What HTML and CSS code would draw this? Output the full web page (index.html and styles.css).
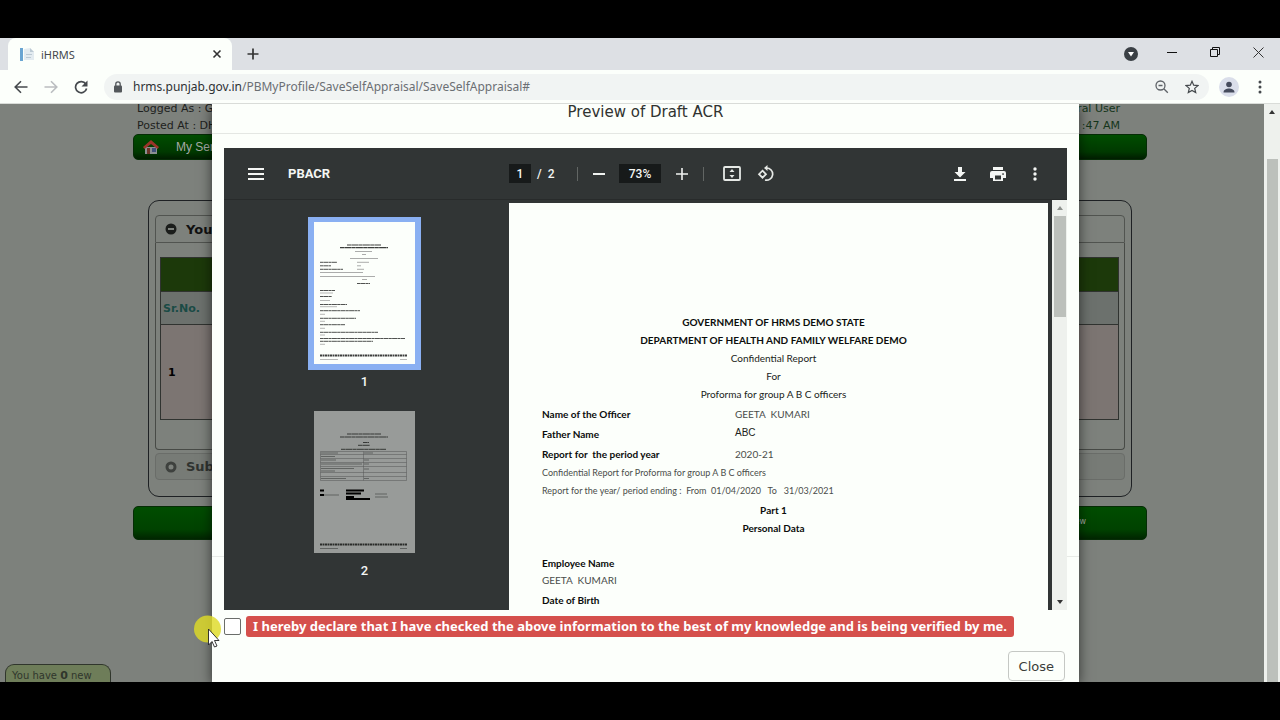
FILE: index.html
```html
<!DOCTYPE html>
<html lang="en">
<head>
<meta charset="utf-8">
<title>iHRMS</title>
<link rel="stylesheet" href="styles.css">
</head>
<body>
<div class="browser">
  <div class="tabstrip">
    <div class="tab">
      <svg class="favicon" width="16" height="16" viewBox="0 0 16 16"><path fill="#6aa5d2" d="M1 2h3v13H1z"/><path fill="#e3ebf0" d="M5 3l6-1 4 4v8H5z"/><path fill="#bccad4" d="M11 2l4 4h-4zM7 8h6v1H7zM7 11h5v1H7z"/></svg>
      <span class="tab-title">iHRMS</span>
      <button class="icon-btn" aria-label="Close tab"><svg width="10" height="10" viewBox="0 0 10 10"><path d="M1.500 1.500l7 7M8.500 1.500l-7 7" stroke="#333" stroke-width="1.600"/></svg></button>
    </div>
    <button class="icon-btn new-tab" aria-label="New tab"><svg width="12" height="12" viewBox="0 0 12 12"><path d="M6 .5v11M.5 6h11" stroke="#333" stroke-width="1.700"/></svg></button>
    <div class="window-controls">
      <button class="icon-btn search-tabs" aria-label="Search tabs"><svg width="14" height="14" viewBox="0 0 14 14"><circle cx="7" cy="7" r="7" fill="#3b4045"/><path d="M4 5h6L7 9.500z" fill="#fff"/></svg></button>
      <button class="icon-btn" aria-label="Minimize"><svg width="10" height="10" viewBox="0 0 10 10"><path d="M0 3.500h10" stroke="#111"/></svg></button>
      <button class="icon-btn" aria-label="Restore"><svg width="10" height="14" viewBox="0 0 10 14" fill="none" stroke="#111"><path d="M.5 2.500h7v7h-7zM2.500 2.500v-2h7v7h-2"/></svg></button>
      <button class="icon-btn" aria-label="Close window"><svg width="11" height="15" viewBox="0 0 11 15"><path d="M.5.5l10 10M10.500.5l-10 10" stroke="#333"/></svg></button>
    </div>
  </div>

  <div class="toolbar">
    <button class="icon-btn" aria-label="Back"><svg width="14" height="14" viewBox="0 0 14 14" fill="none" stroke="#45494d" stroke-width="1.600"><path d="M13.500 7H1.500M7 1.200L1.200 7 7 12.800"/></svg></button>
    <button class="icon-btn" aria-label="Forward"><svg width="14" height="14" viewBox="0 0 14 14" fill="none" stroke="#babdc0" stroke-width="1.600"><path d="M.5 7h12M7 1.200L12.800 7 7 12.800"/></svg></button>
    <button class="icon-btn" aria-label="Reload"><svg width="14" height="14" viewBox="0 0 14 14"><path d="M11.800 4A5.600 5.600 0 1 0 12.600 8.500" fill="none" stroke="#45494d" stroke-width="1.700"/><path d="M13.500.5v6h-6z" fill="#45494d"/></svg></button>
    <div class="address">
      <svg width="10" height="12" viewBox="0 0 10 12"><rect x="1" y="4.500" width="8" height="7" rx="1" fill="#53575b"/><path d="M2.800 5V3a2.200 2.200 0 0 1 4.400 0v2" fill="none" stroke="#53575b" stroke-width="1.300"/></svg>
      <div class="url"><span class="host">hrms.punjab.gov.in</span>/PBMyProfile/SaveSelfAppraisal/SaveSelfAppraisal#</div>
      <button class="icon-btn" aria-label="Zoom"><svg width="14" height="14" viewBox="0 0 14 14" fill="none" stroke="#5f6368" stroke-width="1.300"><circle cx="5.500" cy="5.500" r="4.500"/><path d="M3.500 5.500h4M8.800 8.800l4 4"/></svg></button>
      <button class="icon-btn" aria-label="Bookmark"><svg width="14" height="14" viewBox="0 0 14 14" fill="none" stroke="#45494d" stroke-width="1.200"><path d="M7 1.300l1.700 3.900 4.200.4-3.200 2.800 1 4.200L7 10.400l-3.700 2.200 1-4.200L1.100 5.600l4.200-.4z"/></svg></button>
    </div>
    <button class="icon-btn profile" aria-label="Profile"><svg width="20" height="20" viewBox="0 0 20 20"><circle cx="10" cy="10" r="10" fill="#dadeea"/><circle cx="10" cy="7.500" r="2.800" fill="#454b5c"/><path d="M4.500 15.500c0-3 3-4 5.500-4s5.500 1 5.500 4z" fill="#454b5c"/></svg></button>
    <button class="icon-btn" aria-label="Menu"><svg width="4" height="14" viewBox="0 0 4 14" fill="#45494d"><circle cx="2" cy="2" r="1.500"/><circle cx="2" cy="7" r="1.500"/><circle cx="2" cy="12" r="1.500"/></svg></button>
  </div>

  <div class="viewport">
    <div class="page">
      <div class="user-lines">
        <div>Logged As : GE<br>Posted At : DH</div>
        <div class="user-right">ral User<br>:47 AM</div>
      </div>
      <div class="nav">
        <svg width="18" height="16" viewBox="0 0 18 16"><path d="M3 8h12v7H3z" fill="#8b8f92"/><path d="M9 1L1 8l1.500 2L9 5l6.500 5L17 8z" fill="#9a3429"/><path d="M5 9h3v6H5z" fill="#6b3428"/><path d="M10 9h4v4h-4z" fill="#40507a"/></svg>
        <span>My Service</span>
      </div>
      <div class="panel">
        <div class="section-head">
          <svg width="12" height="12" viewBox="0 0 12 12"><circle cx="6" cy="6" r="5.500" fill="#1b1d1b"/><path d="M3 5h6v2H3z" fill="#7d817c"/></svg>
          <span>Your</span>
        </div>
        <div class="section-body">
          <table class="grid">
            <tr class="band"><td colspan="2"></td></tr>
            <tr class="heads"><th>Sr.No.</th><th></th></tr>
            <tr class="record"><td>1</td><td></td></tr>
          </table>
        </div>
        <div class="section-head closed">
          <svg width="12" height="12" viewBox="0 0 12 12"><circle cx="6" cy="6" r="4" fill="#7d817c" stroke="#3e413e" stroke-width="3"/></svg>
          <span>Submitted</span>
        </div>
      </div>
      <div class="action-bar">View</div>
    </div>
    <div class="scrollbar"><div class="arrow-up"></div><div class="thumb"></div></div>

    <div class="notice">You have <b>0</b> new</div>

    <div class="overlay">
      <div class="modal">
        <h1 class="modal-title">Preview of Draft ACR</h1>
        <div class="modal-rule"></div>
        <div class="modal-body">
          <div class="pdf">
            <div class="pdf-bar">
              <div class="pdf-name">
                <button class="icon-btn" aria-label="Toggle sidebar"><svg width="16" height="12" viewBox="0 0 16 12"><path d="M0 1h16M0 6h16M0 11h16" stroke="#f4f6f4" stroke-width="2"/></svg></button>
                <span>PBACR</span>
              </div>
              <div class="pdf-pages"><input class="page-input" type="text" value="1" aria-label="Page"><span>/</span><span>2</span></div>
              <i class="sep"></i>
              <button class="icon-btn" aria-label="Zoom out"><svg width="12" height="12" viewBox="0 0 12 12"><path d="M0 6h12" stroke="#f0f2f0" stroke-width="2"/></svg></button>
              <input class="zoom-input" type="text" value="73%" aria-label="Zoom level">
              <button class="icon-btn" aria-label="Zoom in"><svg width="12" height="12" viewBox="0 0 12 12"><path d="M0 6h12M6 0v12" stroke="#f0f2f0" stroke-width="1.600"/></svg></button>
              <i class="sep"></i>
              <button class="icon-btn fit" aria-label="Fit to page"><svg width="18" height="15" viewBox="0 0 18 15"><rect x="1" y="1" width="16" height="13" rx="1" fill="none" stroke="#e6e9e6" stroke-width="1.800"/><path d="M9 3l2.500 3h-5zM9 12L6.500 9h5z" fill="#e6e9e6"/></svg></button>
              <button class="icon-btn" aria-label="Rotate"><svg width="18" height="18" viewBox="0 0 18 18" fill="none" stroke="#e6e9e6" stroke-width="1.700"><path d="M5.500 5.700L9 9.200l-3.500 3.500L2 9.200zM9.500 3a6.100 6.100 0 1 1-1.500 12"/><path d="M10.500 0v6L7 3z" fill="#e6e9e6" stroke="none"/></svg></button>
              <div class="pdf-actions">
                <button class="icon-btn" aria-label="Download"><svg width="12" height="14" viewBox="0 0 12 14" fill="#f4f6f4"><path d="M4 0h4v5h3.500L6 10.500.5 5H4zM0 12h12v2H0z"/></svg></button>
                <button class="icon-btn" aria-label="Print"><svg width="16" height="14" viewBox="0 0 16 14"><path fill="#f4f6f4" fill-rule="evenodd" d="M3 0h10v3H3zM2 4h12q2 0 2 2v5h-3v3H3v-3H0V6q0-2 2-2zM5 8.500v4h6v-4zM13 6.200a.8.8 0 1 0 .1 0z"/></svg></button>
                <button class="icon-btn" aria-label="More"><svg width="4" height="14" viewBox="0 0 4 14" fill="#f4f6f4"><circle cx="2" cy="2" r="1.700"/><circle cx="2" cy="7" r="1.700"/><circle cx="2" cy="12" r="1.700"/></svg></button>
              </div>
            </div>
            <div class="pdf-main">
              <div class="thumbs">
                <div class="sheet current">
                  <svg width="101" height="142" viewBox="0 0 101 142" stroke="#3c3e3c" stroke-width=".9">
                    <path d="M33 23h34M26 25.700h48" stroke-width="1.200" stroke-dasharray="4 .3 7 .3"/>
                    <path d="M41 29.500h17M48 32.500h4M36 36.500h28M43 40.300h12M43 43.800h4M43 47.300h7M6 50.500h43M6 54.500h55M48 57.500h5" stroke-width=".7" stroke="#888"/>
                    <path d="M43 61.500h13M6 40.300h17M6 43.800h11M6 47.300h23M6 68.500h15M6 74.500h12M6 82.500h27M6 88.700h40M6 96.300h36M6 102.700h25M6 110.300h58M6 116.500h85M6 119.300h53" stroke-dasharray="3 .3 5 .3"/>
                    <path d="M6 71h13M6 78.500h10M6 84.700h17M6 92.300h5M6 99.300h5M6 106.300h5M6 113h5M6 122.300h5M6 137.500h18M86 137.500h7" stroke-width=".7" stroke="#999"/>
                    <path d="M6 133.500h87" stroke-width="1.800" stroke-dasharray="2 .5"/>
                  </svg>
                </div>
                <div class="thumb-no">1</div>
                <div class="sheet dim">
                  <svg width="101" height="142" viewBox="0 0 101 142" stroke="#2a2c2a">
                    <path d="M33 23h34M26 26h48M44 34.300h12M27 38.300h45M49 31.500h6" stroke-width=".9" stroke-dasharray="4 .3 7 .3"/>
                    <path d="M6.500 40.500h86v29h-86zM49.500 40.500v29M6.500 43.500h86M6.500 47.500h86M6.500 51.500h86M6.500 55.500h86M6.500 61.500h86M6.500 65.500h86" stroke="#555" stroke-width=".5" fill="none"/>
                    <path d="M7 42h17M50 42h9M7 45.500h14M7 49h15M7 53h41M7 57.500h33M7 60h14M7 67.500h25M50 49h5M50 53h5M50 58h5M50 67.500h5M7 84h18M61 83h12M61 86h13M6 137.500h18M86 137.500h7" stroke-width=".5"/>
                    <path d="M6 79.500h4M6 84h4M32 79.500h18M32 82.500h15M32 86h8M32 88h24" stroke="#000" stroke-width="2"/>
                    <path d="M6 133.500h87" stroke-width="1.800" stroke-dasharray="2 .5"/>
                  </svg>
                </div>
                <div class="thumb-no">2</div>
              </div>
              <div class="document">
                <div class="doc-title">
                  <b>GOVERNMENT OF HRMS DEMO STATE</b>
                  <b>DEPARTMENT OF HEALTH AND FAMILY WELFARE DEMO</b>
                  <span>Confidential Report</span>
                  <span>For</span>
                  <span>Proforma for group A B C officers</span>
                </div>
                <dl class="facts">
                  <dt>Name of the Officer</dt><dd>GEETA&nbsp; KUMARI</dd>
                  <dt>Father Name</dt><dd class="arial">ABC</dd>
                  <dt>Report for&nbsp; the period year</dt><dd>2020-21</dd>
                </dl>
                <p class="small">Confidential Report for Proforma for group A B C officers</p>
                <p class="small">Report for the year/ period ending :&nbsp; From&nbsp; 01/04/2020&nbsp;&nbsp; To&nbsp;&nbsp; 31/03/2021</p>
                <div class="part"><b>Part 1</b><b>Personal Data</b></div>
                <dl class="fields">
                  <dt>Employee Name</dt><dd>GEETA&nbsp; KUMARI</dd>
                  <dt>Date of Birth</dt>
                </dl>
              </div>
              <div class="pdf-scroll"><div class="arrow-up faint"></div><div class="pdf-thumb"></div><div class="arrow-down"></div></div>
            </div>
          </div>
          <div class="declare">
            <input type="checkbox" id="declare">
            <label for="declare">I hereby declare that I have checked the above information to the best of my knowledge and is being verified by me.</label>
          </div>
        </div>
        <div class="modal-foot"><button class="close-btn">Close</button></div>
      </div>
    </div>

    <svg class="pointer" width="30" height="36" viewBox="0 0 30 36"><circle cx="13.500" cy="14" r="13.500" fill="#dedb26" fill-opacity=".82"/><path d="M14.500 14v16l3.500-3.500 2.500 5.500 2.500-1-2.500-5.500h4.500z" fill="#fff" stroke="#222" stroke-width=".9"/></svg>
  </div>
</div>
</body>
</html>
```
FILE: styles.css
```css
* { box-sizing: border-box; }
body { margin: 0; background: #000; font-family: "DejaVu Sans", sans-serif; }
h1, p, dl, dd { margin: 0; }
svg { display: block; flex: none; }
.icon-btn { display: flex; flex: none; padding: 0; border: 0; background: none; }

.browser { display: flex; flex-direction: column; height: 100vh; padding: 38px 0; }

/* Browser chrome */
.tabstrip { display: flex; align-items: center; height: 32px; padding: 0 16px 0 8px; background: #dde0e4; }
.tab { display: flex; align-items: center; align-self: stretch; width: 224px; padding: 0 10px 0 11px; border-radius: 8px 8px 0 0; background: #fcfffb; }
.tab-title { flex: 1; margin-left: 6px; font: 11px "Noto Sans", sans-serif; color: #45494d; }
.new-tab { margin-left: 15px; }
.window-controls { display: flex; align-items: center; gap: 33px; margin-left: auto; }
.search-tabs { margin-right: -4px; }
.toolbar { display: flex; align-items: center; flex: none; gap: 16px; height: 34px; padding: 0 18px 0 14px; background: #fcfffb; border-bottom: 1px solid #d9dcd8; }
.address { display: flex; flex: 1; align-items: center; gap: 16px; height: 26px; margin-right: -6px; padding: 0 10px 0 9px; border-radius: 13px; background: #f1f4f3; }
.profile { margin-right: 3px; }
.url { flex: 1; margin-left: -6px; font: 12px "Noto Sans", sans-serif; color: #6b6f73; white-space: nowrap; }
.host { color: #2e3134; }

.viewport { position: relative; display: flex; flex: 1; min-height: 0; overflow: hidden; background: #7d817c; }
.scrollbar { display: flex; flex-direction: column; align-items: center; width: 16px; padding-top: 6px; background: #eef1ed; }
.arrow-up, .arrow-down { width: 0; border: 3px solid transparent; }
.arrow-up { border-top: 0; border-bottom: 4px solid #333; }
.arrow-down { border-bottom: 0; border-top: 4px solid #333; }
.arrow-up.faint { border-bottom-color: #8d918d; }
.thumb { flex: 1; width: 11px; margin-top: 45px; background: #bcc0bb; }

/* Page behind the dialog */
.page { flex: 1; min-width: 0; padding: 0 117px 0 133px; }
.user-lines { display: flex; justify-content: space-between; margin-top: -4px; padding: 0 27px 0 4px; font-size: 11px; line-height: 17px; color: #1d1f1d; }
.user-right { text-align: right; color: #14351a; }
.nav { display: flex; align-items: center; gap: 16px; height: 26px; padding-left: 8px; border: 1px solid #062c06; border-radius: 5px; background: linear-gradient(#004d00, #003900 70%, #001d00); font: 12px "Liberation Sans", sans-serif; color: #a6aaa6; }
.panel { margin: 40px 15px 0; padding: 14px 6px 16px; border: 1px solid #1e2124; border-radius: 11px; }
.section-head { display: flex; align-items: center; gap: 9px; height: 28px; padding-left: 9px; border: 1px solid #515450; border-radius: 4px 4px 0 0; font-size: 13px; font-weight: bold; color: #111; }
.section-head.closed { height: 27px; margin-top: 3px; border-color: #6a6d69; border-radius: 4px; color: #303330; background: #777b76; }
.section-body { padding: 14px 5px 29px 4px; border: 1px solid #474a46; border-top: 0; border-radius: 0 0 4px 4px; }
.grid { width: 100%; border-collapse: collapse; table-layout: fixed; font-size: 11px; font-weight: bold; }
.grid td, .grid th { padding: 0 2px; border: 1px solid #303330; text-align: left; }
.grid .band td { height: 34px; background: #1c390a; }
.grid .heads th { height: 33px; color: #1a4b45; background: #6c716d; }
.heads th:first-child { width: 50px; }
.grid .record td { height: 95px; padding-left: 7px; background: #7c7572; }
.action-bar { height: 34px; margin-top: 9px; padding-right: 60px; border: 1px solid #062c06; border-radius: 5px; background: linear-gradient(#004d00, #004200 70%, #002500); font-size: 8px; line-height: 30px; text-align: right; color: #a6aaa6; }
.notice { position: absolute; left: 5px; bottom: 0; width: 106px; height: 18px; padding-left: 6px; border: 1px solid #30362c; border-bottom: 0; border-radius: 9px 9px 0 0; background: #6e7d59; font-size: 10px; line-height: 22px; color: #30362c; white-space: nowrap; }
.notice b { font-size: 11px; }

/* Dialog */
.overlay { position: absolute; inset: 0; padding: 0 201px 0 212px; }
.modal { position: relative; height: 100%; background: #fcfffb; box-shadow: 0 3px 12px rgba(0, 0, 0, .6); }
.modal-title { height: 30px; border-bottom: 1px solid #e4e7e3; font-size: 15px; font-weight: normal; line-height: 17px; text-align: center; color: #303330; }
.modal-rule { position: absolute; top: 452px; left: 0; right: 0; border-top: 1px solid #e8ebe7; }
.modal-body { position: relative; padding: 14px 12px 0; }

.pdf-bar { display: flex; align-items: center; height: 52px; padding-right: 30px; background: #313535; border-bottom: 1px solid #282b2b; font: bold 13px Roboto, sans-serif; color: #f4f6f4; }
.pdf-name { display: flex; align-items: center; gap: 24px; width: 285px; padding-left: 24px; }
.pdf-pages { display: flex; align-items: center; gap: 6px; width: 68px; font-size: 12px; font-weight: 500; }
.page-input, .zoom-input { height: 19px; padding: 0; border: 0; background: #171a1a; font: 500 12px Roboto, sans-serif; text-align: center; color: #f4f6f4; }
.page-input { width: 22px; }
.zoom-input { width: 42px; margin: 0 15px 0 14px; }
.sep { width: 1px; height: 14px; margin-right: 15px; background: #626664; }
.zoom-input + .icon-btn { margin-right: 15px; }
.fit { margin: 0 16px 0 4px; }
.pdf-actions { display: flex; align-items: center; gap: 30px; margin-left: auto; }
.pdf-actions .icon-btn:nth-child(2) { margin-left: -6px; margin-right: -3px; }

.pdf-main { display: flex; height: 410px; overflow: hidden; background: #313535; }
.thumbs { display: flex; flex: none; flex-direction: column; align-items: center; width: 281px; padding-top: 17px; }
.sheet { border: 6px solid transparent; background: #fcfffb padding-box; }
.current { border-color: #8ab0f2; border-top-width: 5px; }
.sheet.dim { background-color: #989b99; }
.thumb-no { height: 35px; font: 500 13px/24px Roboto, sans-serif; color: #f4f6f4; }
.document { flex: 1; margin: 3px 4px 0; padding: 110px 43px 0 33px; background: #fcfffb; font: 10px/18px Lato, sans-serif; color: #202320; white-space: nowrap; }
.doc-title, .part { display: flex; flex-direction: column; align-items: center; }
.facts { display: grid; grid-template-columns: 193px 1fr; margin-top: 1px; line-height: 20px; }
.document dt, .document b { font-weight: bold; color: #0b0d0b; }
.document dd { color: #4a4d4a; }
.document .arial { font: 10px/18px "Liberation Sans", sans-serif; color: #202320; }
.small { font-size: 9px; color: #4a4d4a; }
.part { margin-top: 1px; }
.fields { margin-top: 17px; }
.fields dd { line-height: 16px; margin-bottom: 3px; }
.pdf-scroll { display: flex; flex-direction: column; align-items: center; width: 15px; padding: 6px 0; background: #eef1ed; }
.pdf-thumb { width: 12px; height: 101px; margin: 6px 0 auto; background: #bcc0bb; }

.declare { display: flex; align-items: center; gap: 5px; margin-top: 6px; }
.declare input { appearance: none; flex: none; width: 17px; height: 17px; margin: 0; border: 1px solid #6a6d6a; border-radius: 2px; background: #fff; }
.declare label { padding: 0 7px; border-radius: 3px; background: #d5504c; font: bold 13px/21px "Noto Sans", sans-serif; color: #fff; white-space: nowrap; }
.modal-foot { display: flex; justify-content: flex-end; padding: 14px 14px 0; }
.close-btn { height: 30px; padding: 0 10px; border: 1px solid #c5c8c4; border-radius: 4px; background: #fcfffb; font: 13px "DejaVu Sans", sans-serif; color: #3a3d3a; }

.pointer { position: absolute; left: 194px; top: 511px; }
```
